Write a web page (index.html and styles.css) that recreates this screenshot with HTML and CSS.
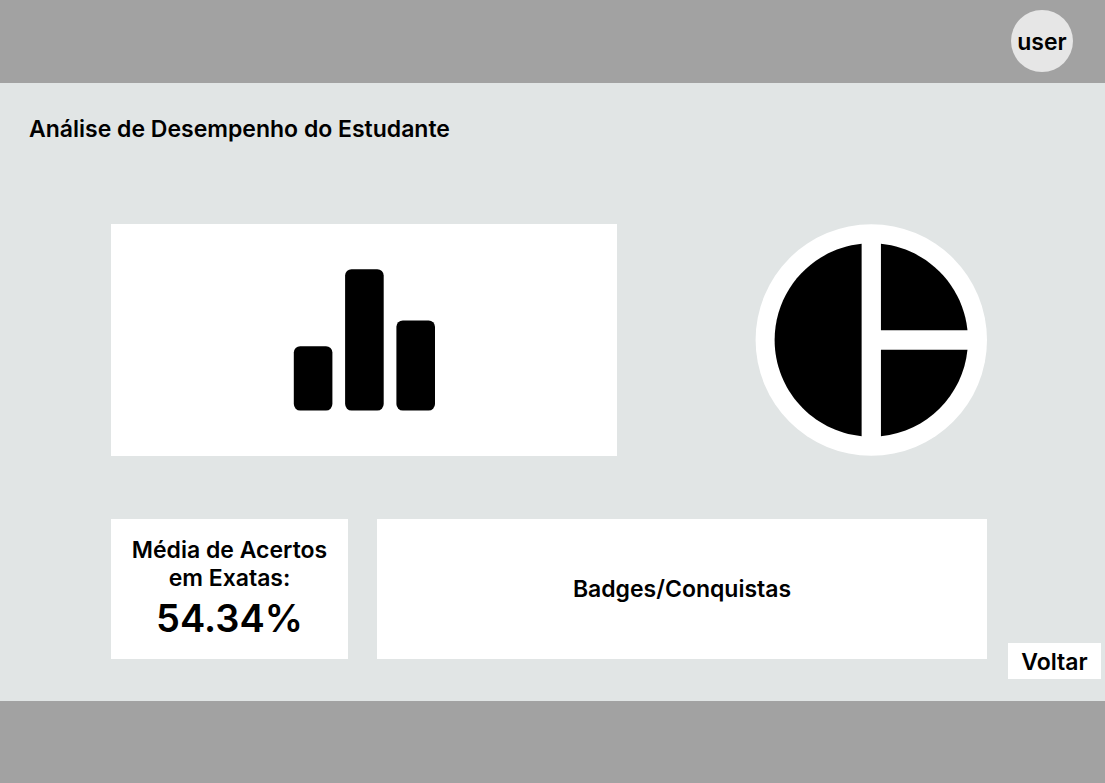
FILE: index.html
```html
<!DOCTYPE html>
<html lang="pt-BR">
<head>
<meta charset="utf-8">
<meta name="viewport" content="width=device-width, initial-scale=1">
<title>Análise de Desempenho do Estudante</title>
<link rel="stylesheet" href="styles.css">
</head>
<body>
<header class="topbar">
  <button class="avatar" type="button">user</button>
</header>
<main class="page">
  <h1 class="title">Análise de Desempenho do Estudante</h1>
  <div class="body">
    <div class="dashboard">
      <div class="charts">
        <section class="card">
          <svg class="bars" viewBox="0 0 142 142" aria-hidden="true">
            <rect x="0.8" y="77.2" width="38.6" height="64.3" rx="6.4"/>
            <rect x="52.1" y="0.2" width="38.6" height="141.3" rx="6.4"/>
            <rect x="103.4" y="51.4" width="38.6" height="90.1" rx="6.4"/>
          </svg>
        </section>
        <svg class="pie" viewBox="0 0 24 24" aria-hidden="true">
          <circle class="pie-base" cx="12.03" cy="12" r="11.97"/>
          <path d="M11.03 2.05v19.9C5.98 21.45 2.03 17.19 2.03 12S5.98 2.55 11.03 2.05z"/>
          <path d="M13.03 2.05V11h8.95C21.51 6.28 17.75 2.52 13.03 2.05z"/>
          <path d="M13.03 13v8.95c4.72-.47 8.48-4.23 8.95-8.95z"/>
        </svg>
      </div>
      <div class="summary">
        <section class="card">
          <h2 class="label">Média de Acertos em Exatas:</h2>
          <p class="score">54.34%</p>
        </section>
        <section class="card">
          <h2 class="label">Badges/Conquistas</h2>
        </section>
      </div>
    </div>
    <button class="back" type="button">Voltar</button>
  </div>
</main>
<footer class="footer"></footer>
</body>
</html>
```

FILE: styles.css
```css
* {
  box-sizing: border-box;
}

body {
  margin: 0;
  min-height: 100vh;
  display: flex;
  flex-direction: column;
  background: #e1e5e5;
  color: #000;
  font: 600 23px/28px Inter, sans-serif;
}

h1, h2, p {
  margin: 0;
  font: inherit;
}

button {
  border: 0;
  padding: 0;
  color: inherit;
  font: inherit;
  cursor: pointer;
}

.topbar {
  display: flex;
  justify-content: flex-end;
  padding: 10px 32px 11px;
  background: #a2a2a2;
}

.avatar {
  width: 62px;
  height: 62px;
  padding-top: 2px;
  border-radius: 50%;
  background: #e6e6e6;
}

.page {
  flex: 1;
  display: flex;
  flex-direction: column;
  justify-content: space-between;
  gap: 32px;
  padding: 32px 4px 22px 0;
}

.title {
  padding-left: 29px;
}

.body {
  display: flex;
  align-items: flex-end;
  gap: 21px;
  padding-left: 111px;
}

.dashboard {
  flex: 1;
  display: grid;
  gap: 63px;
  padding-bottom: 20px;
}

.charts {
  display: grid;
  grid-template-columns: 1fr 232px;
  gap: 138px;
}

.summary {
  display: grid;
  grid-template-columns: 237px 1fr;
  gap: 29px;
}

.card {
  display: flex;
  flex-direction: column;
  align-items: center;
  justify-content: center;
  padding: 17px;
  background: #fff;
  text-align: center;
}

.bars {
  width: 142px;
}

.pie {
  width: 232px;
}

.pie-base {
  fill: #fff;
}

.score {
  padding: 4px 0 2px;
  font-size: 38px;
  line-height: 44px;
}

.back {
  width: 93px;
  height: 36px;
  padding-top: 2px;
  background: #fff;
}

.footer {
  height: 82px;
  background: #a2a2a2;
}
```
